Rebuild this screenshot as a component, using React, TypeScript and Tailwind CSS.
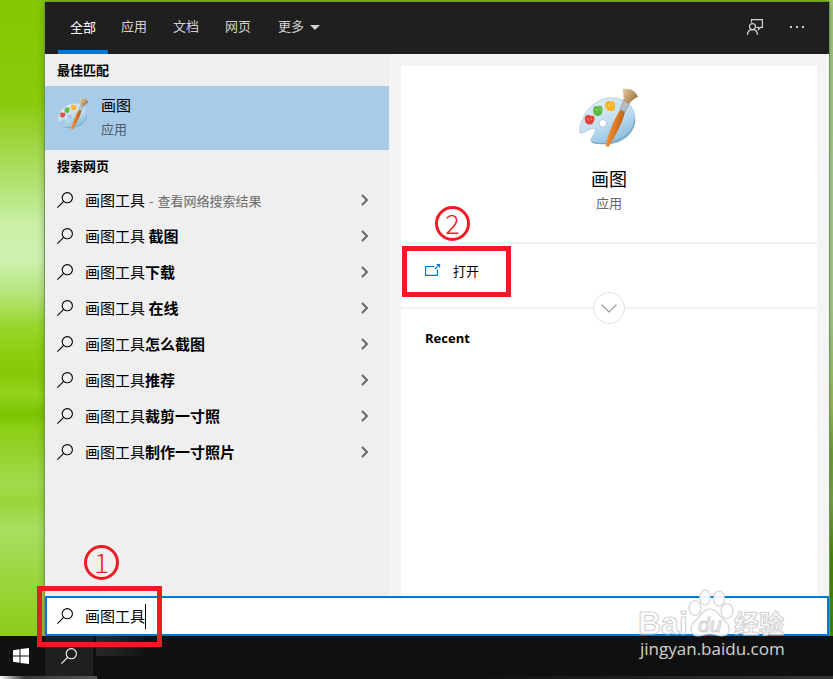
import { useState } from 'react';

const tabs = ['全部', '应用', '文档', '网页'];

const suggestions = [
  { suffix: '', note: '查看网络搜索结果' },
  { suffix: ' 截图' },
  { suffix: '下载' },
  { suffix: ' 在线' },
  { suffix: '怎么截图' },
  { suffix: '推荐' },
  { suffix: '裁剪一寸照' },
  { suffix: '制作一寸照片' },
];

function SearchIcon({ className = '' }: { className?: string }) {
  return (
    <svg viewBox="0 0 16 16" className={`size-4 shrink-0 ${className}`} fill="none" stroke="currentColor" aria-hidden="true">
      <circle cx="10.3" cy="5.7" r="5.1" strokeWidth="1.1" />
      <path d="M6.6 9.4 0.4 15.6" strokeWidth="1.1" />
    </svg>
  );
}

function StepMark({ n, className = '' }: { n: number; className?: string }) {
  return (
    <span
      className={`pointer-events-none absolute flex size-[35px] items-center justify-center rounded-full border-[3px] border-[#ed1c24] pb-0.5 text-[27px] leading-7 font-light text-[#ed1c24] ${className}`}
    >
      {n}
    </span>
  );
}

function PaintIcon({ id, className = '' }: { id: string; className?: string }) {
  return (
    <svg viewBox="0 0 60 60" className={`shrink-0 ${className}`} aria-hidden="true">
      <defs>
        <linearGradient id={`${id}-board`} x1="0.2" y1="0" x2="0.8" y2="1">
          <stop offset="0" stopColor="#e2f0f8" />
          <stop offset="0.5" stopColor="#c3dff0" />
          <stop offset="1" stopColor="#7fb6da" />
        </linearGradient>
        <linearGradient id={`${id}-bristle`} x1="0" y1="0" x2="1" y2="0.6">
          <stop offset="0" stopColor="#e9cfa4" />
          <stop offset="1" stopColor="#9c7040" />
        </linearGradient>
        <linearGradient id={`${id}-handle`} x1="0" y1="0" x2="1" y2="0.4">
          <stop offset="0" stopColor="#f7b264" />
          <stop offset="0.5" stopColor="#e5822a" />
          <stop offset="1" stopColor="#b3550f" />
        </linearGradient>
      </defs>
      <path
        fillRule="evenodd"
        d="M1 45C0 31 12 10 33 10C47 10 56 19 56 31C56 46 43 56 27 56C20 56 13 55.500 12 53C11 50 18 44 16 41C13 38 5 46 1 45ZM23.800 31.500A3.800 3.800 0 0 0 23.800 39.100A3.800 3.800 0 0 0 23.800 31.500Z"
        fill={`url(#${id}-board)`}
        stroke="#9dc0d6"
        strokeWidth="0.7"
      />
      <path d="M12.500 54C20 56.500 32 56 40 52C50 47 55.500 39 55.700 31" fill="none" stroke="#6e9fc2" strokeWidth="1.1" />
      <path d="M6 29c2-3 5-2 6-1c2-1 4 0 3.500 3c-.5 4-3 6-5.500 5.500c-3 0-5-4-4-7.500z" fill="#e2453b" />
      <path d="M14.500 20c1-3 3-2 4.500-1.500c2-1.500 4.500-.5 4.500 2c0 5-1 7.500-5 7.500c-4-.5-5-4-4-8z" fill="#5fba42" />
      <path d="M26.500 15c1-2.500 3.500-2.500 5-1.500c2.500-1 5 .5 4.500 3c1 4.500-1.500 7-5 6.500c-4-.5-5.500-4-4.500-8z" fill="#fbb323" />
      <path d="M8.500 31l1 1.200M12 30.500l.5 1M17 21l1 1.500M21 20.500l.5 1.500M29.500 16.500l1 2M33.500 15.500l.5 2" stroke="#fff" strokeOpacity="0.35" strokeWidth="1.1" strokeLinecap="round" />
      <path d="M41.500 21.500L46 24C43 36 36 48 29.500 59L26.500 58C29 46 35 31 41.500 21.500Z" fill={`url(#${id}-handle)`} />
      <path d="M44.500 12.500L50 16L46 24L41 21.500Z" fill="#b9bec2" stroke="#858b90" strokeWidth="0.6" />
      <path d="M43.500 1C51-.5 57 3 59 9C56 10 52 13 50 16L44.500 12.500C44.500 9 44.500 4 43.500 1Z" fill={`url(#${id}-bristle)`} />
    </svg>
  );
}

function TopBar({ active, onSelect }: { active: string; onSelect: (tab: string) => void }) {
  return (
    <header className="flex h-[52px] shrink-0 items-stretch bg-[#1f1f1f] pl-[13px] text-[13px] text-[#d2d2d2]">
      <nav className="flex">
        {tabs.map((tab) => (
          <button
            key={tab}
            type="button"
            onClick={() => onSelect(tab)}
            className={
              tab === active
                ? 'border-b-4 border-[#0078d7] px-3 pt-px text-white'
                : 'border-b-4 border-transparent px-[13px]'
            }
          >
            {tab}
          </button>
        ))}
        <button type="button" className="flex items-center gap-1.5 px-3.5 pb-1">
          更多
          <svg viewBox="0 0 10 5" className="mt-0.5 h-[5px] w-2.5" fill="currentColor" aria-hidden="true">
            <path d="M0 0H10L5 5Z" />
          </svg>
        </button>
      </nav>
      <div className="ml-auto flex items-center gap-[25px] pr-6 pb-0.5">
        <button type="button" aria-label="反馈">
          <svg viewBox="0 0 18 18" className="size-[18px]" fill="none" stroke="currentColor" strokeWidth="1.2" aria-hidden="true">
            <path d="M5.500 4.500V1.600H16.400V9.400H14.500L12.500 11.500V9.400H10.500" />
            <circle cx="6.500" cy="8.600" r="3" />
            <path d="M1.500 17C1.500 13.500 3.500 11.700 6.500 11.700S11.500 13.500 11.500 17" />
          </svg>
        </button>
        <button type="button" aria-label="选项">
          <svg viewBox="0 0 16 16" className="size-4" fill="currentColor" aria-hidden="true">
            <path d="M1 7h2v2H1zM7 7h2v2H7zM13 7h2v2h-2z" />
          </svg>
        </button>
      </div>
    </header>
  );
}

function ResultList({ query }: { query: string }) {
  return (
    <div className="w-[344px] shrink-0 bg-[#efefef]">
      <h2 className="flex h-8 items-center px-3 text-[13px] font-bold">最佳匹配</h2>
      <button type="button" className="flex h-16 w-full items-start gap-3 bg-[#a8cbe8] px-3 pt-[9px] text-left">
        <PaintIcon id="best" className="mt-[3px] size-8" />
        <span className="flex flex-col gap-1">
          <span className="text-[15px] leading-5">画图</span>
          <span className="text-[13px] leading-5 text-[#4d5f6e]">应用</span>
        </span>
      </button>
      <h2 className="flex h-8 items-center px-3 text-[13px] font-bold">搜索网页</h2>
      <ul>
        {suggestions.map((item) => (
          <li key={item.suffix}>
            <button type="button" className="flex h-9 w-full items-center gap-3 pr-5 pl-3 text-left text-[15px]">
              <SearchIcon />
              <span className="flex grow items-baseline whitespace-pre">
                {query}
                <b>{item.suffix}</b>
                {item.note && (
                  <span className="flex gap-1 pl-1 text-[13px] text-[#6b6b6b]">
                    <span>-</span>
                    <span>{item.note}</span>
                  </span>
                )}
              </span>
              <svg viewBox="0 0 8 12" className="h-3 w-2" fill="none" stroke="#666" strokeWidth="2" aria-hidden="true">
                <path d="M1 1L6 6L1 11" />
              </svg>
            </button>
          </li>
        ))}
      </ul>
    </div>
  );
}

function Preview() {
  return (
    <div className="flex grow flex-col bg-[#f4f4f4] px-3 pt-3">
      <div className="grow bg-white">
        <div className="flex h-44 flex-col items-center pt-[22px]">
          <PaintIcon id="preview" className="size-[60px]" />
          <h1 className="mt-[18px] text-[18px] leading-6">画图</h1>
          <p className="mt-[3px] text-[13px] leading-5 text-[#666]">应用</p>
        </div>
        <div className="relative border-y-2 border-[#f2f2f2] px-px pt-0.5 pb-2.5">
          <button
            type="button"
            className="flex h-[51px] w-[109px] items-center gap-3 border-5 border-[#ed1c24] pb-px pl-[18px] text-[13px]"
          >
            <svg viewBox="0 0 16 12" className="mb-[3px] h-3 w-4" fill="none" stroke="#0078d7" strokeWidth="1.1" aria-hidden="true">
              <path d="M9.500 2.500H0.600V11.400H12.500V5.500" />
              <path d="M10 5L14.400 0.600M11.500 0.600H14.600V3.500" />
            </svg>
            打开
          </button>
          <StepMark n={2} className="-top-[38px] left-[34px]" />
          <button
            type="button"
            aria-label="展开"
            className="absolute -bottom-[17px] left-1/2 flex size-8 -translate-x-1/2 items-center justify-center rounded-full border border-[#e4e4e4] bg-white"
          >
            <svg viewBox="0 0 16 9" className="h-[9px] w-4" fill="none" stroke="#999" strokeWidth="1.2" aria-hidden="true">
              <path d="M0.500 0.500L8 8L15.500 0.500" />
            </svg>
          </button>
        </div>
        <h2 className="px-6 pt-[19px] font-['Open_Sans',sans-serif] text-[13px] leading-5 font-bold">Recent</h2>
      </div>
    </div>
  );
}

function Watermark() {
  return (
    <svg
      viewBox="0 0 160 76"
      className="pointer-events-none absolute right-[35px] bottom-[14px] z-20 h-[76px] w-40 opacity-90"
      aria-hidden="true"
    >
      <g fill="#fff" stroke="#d0d0d0" strokeWidth="1.2">
        <text x="0" y="45" fontSize="32" className="font-['Liberation_Sans',sans-serif] font-bold">Bai</text>
        <ellipse cx="57" cy="19" rx="6" ry="7.500" />
        <ellipse cx="67" cy="8.500" rx="5.200" ry="7.500" />
        <ellipse cx="81" cy="9.500" rx="5.500" ry="7.500" />
        <ellipse cx="89" cy="22" rx="6" ry="7.500" />
        <path d="M72 20C79 20 81 27 87 32C94 38 92 47 84 47C79 47 77 45 72 45S65 47 60 47C52 47 51 38 57 32C63 27 65 20 72 20Z" />
        <text x="60" y="43" fontSize="21" className="font-['Liberation_Sans',sans-serif] italic">du</text>
        <text x="96" y="44" fontSize="25" className="font-['Noto_Sans_CJK_SC',sans-serif] font-bold">经验</text>
      </g>
      <text x="2" y="66" fontSize="17" fill="#e6e6e6" className="font-['Open_Sans',sans-serif] font-medium">
        jingyan.baidu.com
      </text>
    </svg>
  );
}

function Taskbar() {
  return (
    <footer className="relative shrink-0 bg-[#101010]">
      <div className="flex h-10 items-stretch text-white">
        <button type="button" aria-label="开始" className="flex w-[45px] items-center pl-[13px]">
          <svg viewBox="0 0 16 16" className="size-4" fill="currentColor" aria-hidden="true">
            <path d="M0 2.200L6.500 1.300V7.500H0zM7.500 1.100L16 0V7.500H7.500zM0 8.500H6.500V14.700L0 13.800zM7.500 8.500H16V16L7.500 14.900z" />
          </svg>
        </button>
        <button type="button" aria-label="搜索" className="flex w-12 items-center justify-center bg-[#1f1f1f]">
          <SearchIcon />
        </button>
        <div className="ml-[3px] h-5 w-12 bg-linear-to-r from-[#272727] via-[#242424] via-30% to-[#141414]" />
      </div>
      <div className="flex h-[3px]">
        <div className="w-[97px] bg-linear-to-r from-white via-[#3a3a3a] via-25% to-[#555]" />
        <div className="grow bg-linear-to-r from-[#101010] via-[#101010] via-50% to-[#353535]" />
      </div>
    </footer>
  );
}

export default function App() {
  const [active, setActive] = useState('全部');
  const [query, setQuery] = useState('画图工具');

  return (
    <div className="relative flex h-screen flex-col overflow-hidden font-['Noto_Sans_CJK_SC',sans-serif] text-black">
      {/* 桌面壁纸 */}
      <div className="absolute inset-0 bg-[linear-gradient(180deg,#84c800_0%,#8acb0c_15%,#a5da50_23%,#c8efa5_33%,#cdf2b0_38%,#b8e67e_43%,#98d62c_48%,#8bd00f_52%,#86c908_55%,#92d41b_58%,#7cc300_61%,#8bcf14_63%,#95d42f_67%,#a0db4c_71%,#98d63a_74%,#a8e062_78%,#9cd843_84%,#92d128_90%,#8dcc1c_94%)]" />
      <div className="absolute inset-y-0 right-0 w-1 bg-[linear-gradient(180deg,#a5c978_0%,#a9cb92_25%,#a9cd8f_45%,#9abb5c_60%,#6fa03a_67%,#79a44b_74%,#4b8b0c_82%,#468509_100%)]" />

      <main className="relative mt-0.5 mr-1 ml-[45px] flex grow flex-col shadow-[0_0_0_1px_#729553,0_0_8px_rgba(0,0,0,0.3)]">
        <TopBar active={active} onSelect={setActive} />
        <div className="flex grow">
          <ResultList query="画图工具" />
          <Preview />
        </div>
        <div className="relative z-10 h-10 shrink-0 border-2 border-[#0078d7] bg-white">
          <label className="flex h-full items-center gap-3 pl-2.5 text-[15px]">
            <SearchIcon />
            <span className="flex items-center">
              <input
                aria-label="搜索内容"
                value={query}
                onChange={(e) => setQuery(e.target.value)}
                className="field-sizing-content bg-transparent outline-none"
              />
              <span className="h-[25px] w-px bg-black" />
            </span>
          </label>
          {/* 步骤标注 */}
          <div className="pointer-events-none absolute -top-3 -left-2.5 h-[61px] w-[125px] border-5 border-[#ed1c24]" />
          <StepMark n={1} className="-top-[53px] left-[37px]" />
        </div>
      </main>
      <Taskbar />
      <Watermark />
    </div>
  );
}
